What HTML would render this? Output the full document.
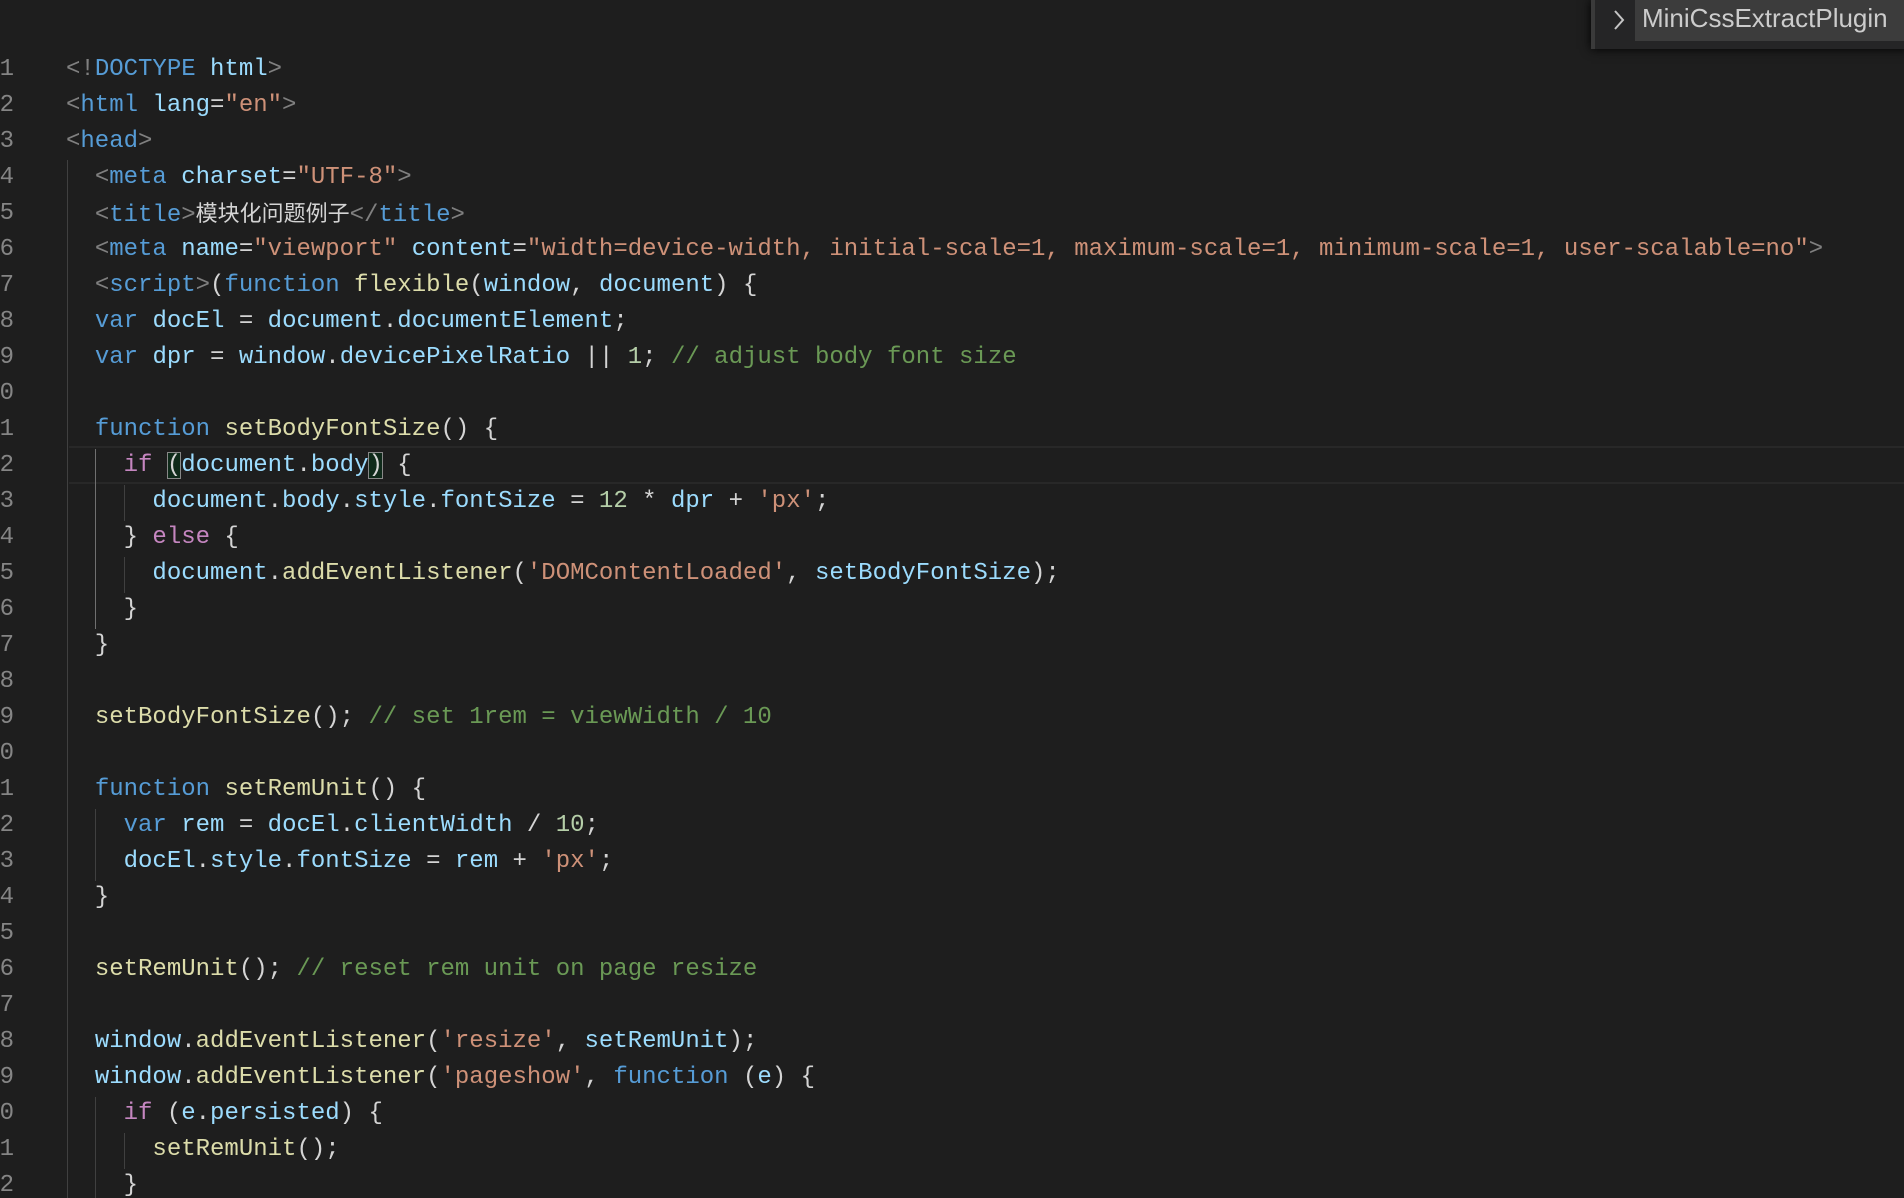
<!DOCTYPE html>
<html><head><meta charset="utf-8"><style>
html,body{margin:0;padding:0;background:#1e1e1e;width:1904px;height:1198px;overflow:hidden;position:relative}
#w{position:absolute;left:0;top:3px;width:1904px;height:1198px}
.l{position:absolute;left:66px;height:36px;line-height:36px;font-family:"Liberation Mono","Noto Sans CJK SC",monospace;font-size:24px;white-space:pre;color:#d4d4d4}
.n{position:absolute;left:-20px;width:34px;text-align:right;height:36px;line-height:36px;font-family:"Liberation Mono",monospace;font-size:24px;color:#858585}
.g{position:absolute;width:1px;background:#404040}
.t{color:#808080}.k{color:#569cd6}.a{color:#9cdcfe}.s{color:#ce9178}.f{color:#dcdcaa}.c{color:#6a9955}.p{color:#c586c0}.m{color:#b5cea8}.w{color:#d4d4d4}
.cj{font-family:"Noto Sans CJK SC",sans-serif;font-size:22px}
.bx{outline:1px solid #888;outline-offset:-1px;background:#0f2a1a}
.cur{position:absolute;left:69px;right:0;top:446px;height:34px;border-top:2px solid #282828;border-bottom:2px solid #282828}
.wid{position:absolute;left:1591px;top:0;width:313px;height:49px;background:#252526;box-shadow:0 0 10px #000;border-left:4px solid #3a3a3a}
.inp{position:absolute;left:40px;top:0;right:0;height:41px;background:#3c3c3c;color:#cccccc;font-family:"Liberation Sans",sans-serif;font-size:26px;line-height:36px;padding-left:7px;white-space:nowrap;overflow:hidden}
</style></head><body>
<div class="cur"></div>
<div id="w">
<div class="g" style="left:67px;top:157px;height:1041px"></div>
<div class="g" style="left:95px;top:446px;height:180px;background:#707070"></div>
<div class="g" style="left:124px;top:482px;height:36px"></div>
<div class="g" style="left:124px;top:554px;height:36px"></div>
<div class="g" style="left:95px;top:806px;height:72px"></div>
<div class="g" style="left:95px;top:1094px;height:104px"></div>
<div class="g" style="left:124px;top:1130px;height:36px"></div>

<div class="n" style="top:49px">1</div><div class="n" style="top:85px">2</div><div class="n" style="top:121px">3</div><div class="n" style="top:157px">4</div><div class="n" style="top:193px">5</div><div class="n" style="top:229px">6</div><div class="n" style="top:265px">7</div><div class="n" style="top:301px">8</div><div class="n" style="top:337px">9</div><div class="n" style="top:373px">0</div><div class="n" style="top:409px">1</div><div class="n" style="top:445px">2</div><div class="n" style="top:481px">3</div><div class="n" style="top:517px">4</div><div class="n" style="top:553px">5</div><div class="n" style="top:589px">6</div><div class="n" style="top:625px">7</div><div class="n" style="top:661px">8</div><div class="n" style="top:697px">9</div><div class="n" style="top:733px">0</div><div class="n" style="top:769px">1</div><div class="n" style="top:805px">2</div><div class="n" style="top:841px">3</div><div class="n" style="top:877px">4</div><div class="n" style="top:913px">5</div><div class="n" style="top:949px">6</div><div class="n" style="top:985px">7</div><div class="n" style="top:1021px">8</div><div class="n" style="top:1057px">9</div><div class="n" style="top:1093px">0</div><div class="n" style="top:1129px">1</div><div class="n" style="top:1165px">2</div>

<div class="l" style="top:49px"><span class="t">&lt;!</span><span class="k">DOCTYPE</span> <span class="a">html</span><span class="t">&gt;</span></div>
<div class="l" style="top:85px"><span class="t">&lt;</span><span class="k">html</span> <span class="a">lang</span>=<span class="s">"en"</span><span class="t">&gt;</span></div>
<div class="l" style="top:121px"><span class="t">&lt;</span><span class="k">head</span><span class="t">&gt;</span></div>
<div class="l" style="top:157px">  <span class="t">&lt;</span><span class="k">meta</span> <span class="a">charset</span>=<span class="s">"UTF-8"</span><span class="t">&gt;</span></div>
<div class="l" style="top:191px">  <span class="t">&lt;</span><span class="k">title</span><span class="t">&gt;</span><span class="cj">模块化问题例子</span><span class="t">&lt;/</span><span class="k">title</span><span class="t">&gt;</span></div>
<div class="l" style="top:229px">  <span class="t">&lt;</span><span class="k">meta</span> <span class="a">name</span>=<span class="s">"viewport"</span> <span class="a">content</span>=<span class="s">"width=device-width, initial-scale=1, maximum-scale=1, minimum-scale=1, user-scalable=no"</span><span class="t">&gt;</span></div>
<div class="l" style="top:265px">  <span class="t">&lt;</span><span class="k">script</span><span class="t">&gt;</span>(<span class="k">function</span> <span class="f">flexible</span>(<span class="a">window</span>, <span class="a">document</span>) {</div>
<div class="l" style="top:301px">  <span class="k">var</span> <span class="a">docEl</span> = <span class="a">document</span>.<span class="a">documentElement</span>;</div>
<div class="l" style="top:337px">  <span class="k">var</span> <span class="a">dpr</span> = <span class="a">window</span>.<span class="a">devicePixelRatio</span> || <span class="m">1</span>; <span class="c">// adjust body font size</span></div>
<div class="l" style="top:409px">  <span class="k">function</span> <span class="f">setBodyFontSize</span>() {</div>
<div class="l" style="top:445px">    <span class="p">if</span> <span class="bx">(</span><span class="a">document</span>.<span class="a">body</span><span class="bx">)</span> {</div>
<div class="l" style="top:481px">      <span class="a">document</span>.<span class="a">body</span>.<span class="a">style</span>.<span class="a">fontSize</span> = <span class="m">12</span> * <span class="a">dpr</span> + <span class="s">'px'</span>;</div>
<div class="l" style="top:517px">    } <span class="p">else</span> {</div>
<div class="l" style="top:553px">      <span class="a">document</span>.<span class="f">addEventListener</span>(<span class="s">'DOMContentLoaded'</span>, <span class="a">setBodyFontSize</span>);</div>
<div class="l" style="top:589px">    }</div>
<div class="l" style="top:625px">  }</div>
<div class="l" style="top:697px">  <span class="f">setBodyFontSize</span>(); <span class="c">// set 1rem = viewWidth / 10</span></div>
<div class="l" style="top:769px">  <span class="k">function</span> <span class="f">setRemUnit</span>() {</div>
<div class="l" style="top:805px">    <span class="k">var</span> <span class="a">rem</span> = <span class="a">docEl</span>.<span class="a">clientWidth</span> / <span class="m">10</span>;</div>
<div class="l" style="top:841px">    <span class="a">docEl</span>.<span class="a">style</span>.<span class="a">fontSize</span> = <span class="a">rem</span> + <span class="s">'px'</span>;</div>
<div class="l" style="top:877px">  }</div>
<div class="l" style="top:949px">  <span class="f">setRemUnit</span>(); <span class="c">// reset rem unit on page resize</span></div>
<div class="l" style="top:1021px">  <span class="a">window</span>.<span class="f">addEventListener</span>(<span class="s">'resize'</span>, <span class="a">setRemUnit</span>);</div>
<div class="l" style="top:1057px">  <span class="a">window</span>.<span class="f">addEventListener</span>(<span class="s">'pageshow'</span>, <span class="k">function</span> (<span class="a">e</span>) {</div>
<div class="l" style="top:1093px">    <span class="p">if</span> (<span class="a">e</span>.<span class="a">persisted</span>) {</div>
<div class="l" style="top:1129px">      <span class="f">setRemUnit</span>();</div>
<div class="l" style="top:1165px">    }</div>
</div>

<div class="wid">
<svg style="position:absolute;left:16px;top:8px" width="16" height="24" viewBox="0 0 16 24"><path d="M4 3 L12 12 L4 21" fill="none" stroke="#c5c5c5" stroke-width="2"/></svg>
<div class="inp">MiniCssExtractPlugin</div>
</div>
</body></html>
